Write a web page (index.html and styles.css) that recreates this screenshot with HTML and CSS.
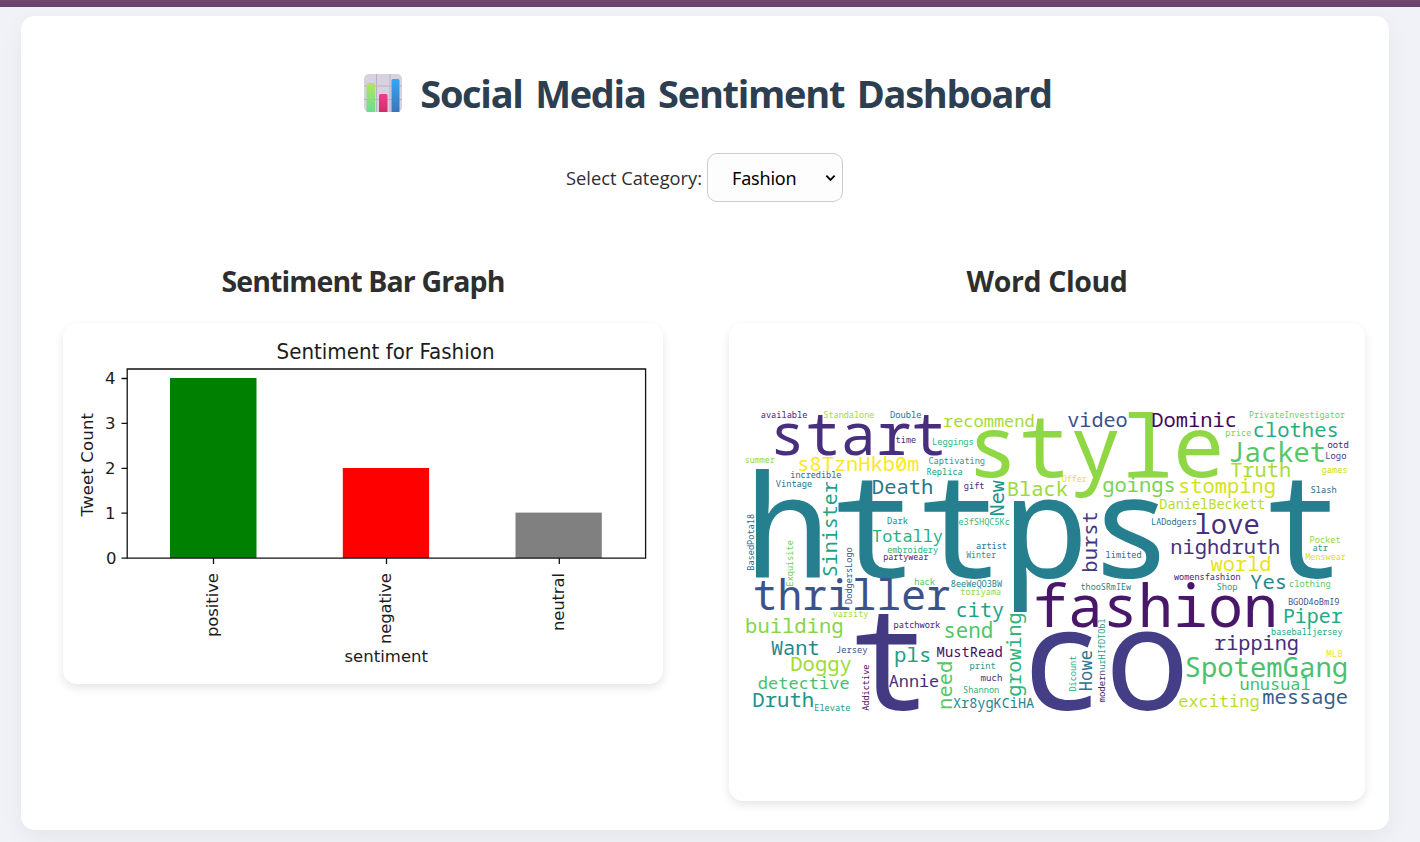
FILE: index.html
```
<!DOCTYPE html>
<html lang="en">
<head>
<meta charset="utf-8">
<title>Social Media Sentiment Dashboard</title>
<link rel="stylesheet" href="styles.css">
</head>
<body>
<div class="topbar"></div>
<main class="container">
  <h1 class="title">
    <svg class="title-icon" viewBox="0 0 40 40" aria-hidden="true">
      <defs>
        <linearGradient id="g1" x1="0" y1="0" x2="0" y2="1"><stop offset="0" stop-color="#b4e45a"/><stop offset="1" stop-color="#66df92"/></linearGradient>
        <linearGradient id="g2" x1="0" y1="0" x2="0" y2="1"><stop offset="0" stop-color="#f03c8c"/><stop offset="1" stop-color="#cf2e68"/></linearGradient>
        <linearGradient id="g3" x1="0" y1="0" x2="0" y2="1"><stop offset="0" stop-color="#35a6f4"/><stop offset="1" stop-color="#3c74bd"/></linearGradient>
      </defs>
      <rect x="1" y="1" width="38" height="38" rx="5" fill="#d8d1e0"/>
      <path d="M13.500 1v38M27 1v38M1 13h38M1 26.500h38" stroke="#b9b2c2" stroke-width="1" fill="none"/>
      <path d="M3.500 39V11.500a1.500 1.500 0 0 1 1.500-1.500h5.500a1.500 1.500 0 0 1 1.500 1.500V39z" fill="url(#g1)"/>
      <path d="M16 39V22.500a1.500 1.500 0 0 1 1.500-1.500h5.500a1.500 1.500 0 0 1 1.500 1.500V39z" fill="url(#g2)"/>
      <path d="M28.500 39V7.500a1.500 1.500 0 0 1 1.500-1.500h5a1.500 1.500 0 0 1 1.500 1.500V39z" fill="url(#g3)"/>
    </svg>
    <span class="title-text">Social Media Sentiment Dashboard</span>
  </h1>
  <div class="picker">
    <label class="picker-label" for="category">Select Category:</label>
    <span class="select">
      <select class="select-input" id="category"><option>Fashion</option></select>
      <svg class="select-arrow" viewBox="0 0 12 8" aria-hidden="true"><path d="M1.500 1.500 6 6l4.500-4.500" fill="none" stroke="#000" stroke-width="2"/></svg>
    </span>
  </div>
  <div class="panels">
    <section class="panel-bar">
      <h2 class="panel-title panel-title-tight">Sentiment Bar Graph</h2>
      <svg class="card chart" viewBox="63 323 600 361">
        <text class="chart-title" x="276.500" y="358.500" textLength="218" lengthAdjust="spacingAndGlyphs">Sentiment for Fashion</text>
        <rect x="170" y="378" width="86.500" height="180" fill="#008000"/>
        <rect x="342.800" y="468" width="86.300" height="90" fill="#f00"/>
        <rect x="515.500" y="512.600" width="86.300" height="45.400" fill="#808080"/>
        <path d="M127.200 369v189.200H645.600V369z" class="axis"/>
        <path d="M121.500 378.500h6M121.500 423.300h6M121.500 468.300h6M121.500 513.200h6M121.500 558.200h6M213.500 558v6M386.500 558v6M559.300 558v6" class="axis"/>
        <g class="ticks">
          <text x="115.500" y="384" text-anchor="end">4</text>
          <text x="115.500" y="429" text-anchor="end">3</text>
          <text x="115.500" y="474" text-anchor="end">2</text>
          <text x="115.500" y="519" text-anchor="end">1</text>
          <text x="116.500" y="564" text-anchor="end">0</text>
          <text transform="translate(218 637) rotate(-90)" textLength="64">positive</text>
          <text transform="translate(391 644) rotate(-90)" textLength="71">negative</text>
          <text transform="translate(563.500 631) rotate(-90)" textLength="58">neutral</text>
          <text transform="translate(93 516.500) rotate(-90)" textLength="103.500">Tweet Count</text>
          <text x="344.500" y="662" textLength="83.500">sentiment</text>
        </g>
      </svg>
    </section>
    <section class="panel-cloud">
      <h2 class="panel-title">Word Cloud</h2>
      <svg class="card cloud" id="cloud" viewBox="729 323 636 478"></svg>
    </section>
  </div>
</main>
<script src="cloud.js"></script>
</body>
</html>
```
FILE: styles.css
```
* { box-sizing: border-box; }
body {
  margin: 0;
  height: 842px;
  overflow: hidden;
  background: #f0f2f7;
  color: #2e2e2e;
  font-family: "Segoe UI", "Open Sans", "Noto Sans", sans-serif;
}
.topbar { height: 7px; background: linear-gradient(#72496f, #68436a); }
.container {
  width: 1368px;
  height: 814px;
  margin: 9px 0 0 21px;
  padding: 47px 24px 0 42px;
  background: #fff;
  border-radius: 14px;
  box-shadow: 0 8px 25px rgba(0, 0, 0, .05);
}
.title {
  display: flex;
  justify-content: center;
  align-items: center;
  gap: 17px;
  height: 60px;
  margin: 0;
  padding-right: 13px;
  color: #2c3e50;
  font-size: 38px;
  font-weight: 700;
  letter-spacing: -1.300px;
  word-spacing: 4px;
  line-height: 60px;
}
.title-icon { width: 40px; height: 40px; }
.title-text { white-space: nowrap; }
.picker {
  display: flex;
  justify-content: center;
  align-items: center;
  gap: 5px;
  height: 49px;
  margin-top: 30px;
  padding-right: 19px;
}
.picker-label { font-size: 18.300px; white-space: nowrap; }
.select { position: relative; display: block; width: 136px; height: 49px; }
.select-input {
  width: 136px;
  height: 49px;
  padding: 0 24px;
  border: 1px solid #ccc;
  border-radius: 10px;
  background: #fdfdfd;
  color: #000;
  font: 18px "Noto Sans", sans-serif;
  letter-spacing: -.2px;
  appearance: none;
}
.select-arrow { position: absolute; right: 7px; top: 21px; width: 11px; height: 8px; }
.panels { display: flex; justify-content: space-between; align-items: flex-start; margin-top: 56px; }
.panel-bar { width: 600px; }
.panel-cloud { width: 636px; }
.panel-title {
  height: 46px;
  margin: 0 0 19px;
  font-size: 28.500px;
  font-weight: 700;
  letter-spacing: -.4px;
  line-height: 46px;
  text-align: center;
}
.panel-title-tight { letter-spacing: -.88px; }
.card {
  display: block;
  width: 100%;
  background: #fff;
  border-radius: 14px;
  box-shadow: 0 4px 10px rgba(0, 0, 0, .1);
}
.chart { height: 361px; fill: #1c1c1c; font-family: "DejaVu Sans", sans-serif; }
.chart-title { font-size: 21px; }
.ticks { font-size: 16.500px; }
.axis { fill: none; stroke: #111; stroke-width: 1.300; }
.cloud { height: 478px; font-family: "Droid Sans Mono", "Noto Sans Mono", "DejaVu Sans Mono", monospace; }
```
FILE: cloud.js
```
// Horizontal words: text, left edge, right edge, baseline, colour, optional vertical stretch
const across = [
  ["available",761.3,807,418,"#472d7b"],["Standalone",824,874,418,"#a5db36"],["Double",890.7,921,418,"#2a788e"],
  ["start",775.7,942,454.8,"#472f7d"],["time",896,915.7,443,"#472d7b"],["Leggings",933,973,445,"#2db27d"],
  ["summer",745.7,774.7,462.7,"#90d743"],["s8TznHkb0m",799.3,918.7,471,"#fde725"],["Captivating",929,984.3,464,"#1f998a"],
  ["Replica",927.3,962,475,"#22a085"],["incredible",791,841,478,"#32648e"],["Vintage",776,811.7,487.3,"#2c738e"],
  ["Death",873.3,932,494.3,"#2a768e"],["https",756,1160,577.7,"#267f8e"],["t",1270,1332.3,577.7,"#267f8e",1.07],
  ["Dark",887.7,907.7,523.7,"#238a8d"],["Totally",872.7,942.3,541.7,"#29af7f"],["embroidery",887.7,937.7,553,"#2ab07f"],
  ["partywear",884,928.3,560,"#482878"],["recommend",944,1033.3,426.7,"#a5db36"],["style",975.7,1219.3,476.8,"#8fd744"],
  ["video",1068,1126.7,426.7,"#3b528b"],["Offer",1062,1086.7,482,"#e2e418"],["gift",964.3,983.7,489,"#481f70"],
  ["Black",1008.7,1067.3,496,"#9bd93c"],["goings",1103.3,1173.7,492.3,"#7ad151"],["e3fSHQC5Kc",959,1009,524.7,"#35b779"],
  ["artist",976.7,1006.3,548.7,"#2f6b8e"],["Winter",966.3,995.7,557.7,"#21908d"],["limited",1106.3,1141,557.7,"#33638d"],
  ["Dominic",1152.7,1235.3,426.7,"#46085c"],["PrivateInvestigator",1249.7,1344.7,418,"#6ece58"],["price",1226,1251,436.3,"#84d44b"],
  ["clothes",1254.3,1336.7,437.3,"#27ad81"],["Jacket",1231,1324,462,"#56c667"],["ootd",1328,1348,448,"#481b6d"],
  ["Logo",1326.3,1346,459,"#424086"],["Truth",1231,1289.7,477,"#aadc32"],["games",1322,1346.7,473,"#c8e020"],
  ["stomping",1180,1274.3,493,"#d2e21b"],["Slash",1311.3,1336,493,"#31688e"],["DanielBeckett",1160.3,1264.3,509,"#b5de2b"],
  ["love",1196.7,1258.3,533.7,"#46307e"],["LADodgers",1152,1196,524.7,"#2d708e"],["nighdruth",1172,1279,553.7,"#46327e"],
  ["Pocket",1310.3,1340,542.7,"#8ed645"],["atr",1313,1327.7,550.7,"#1f948c"],["Menswear",1305.7,1345.7,559.7,"#dde318"],
  ["world",1210.7,1270,571,"#e7e419"],["womensfashion",1174,1240,580,"#482475"],["Yes",1250.7,1285,588.7,"#23898e"],
  ["clothing",1289.7,1330,587,"#5cc863"],["Shop",1217.3,1237,590.3,"#1f9e89"],["BGOD4oBmI9",1288.7,1339,605.3,"#3b528b"],
  ["Piper",1284.7,1342.3,622.7,"#24aa83"],["fashion",1036.3,1274,627.4,"#481769"],["baseballjersey",1271.7,1342.3,635,"#22a884"],
  ["ripping",1215.3,1297.3,650.3,"#472d7b"],["MLB",1326.7,1342.3,656.7,"#f1e51d"],["SpotemGang",1186.7,1346,676.7,"#4ac16d"],
  ["unusual",1240.7,1309.7,690,"#44bf70"],["exciting",1179.3,1258.3,707,"#b8de29"],["message",1263.3,1346.7,704,"#355f8d"],
  ["co",1031,1183,709.8,"#433e85"],["thriller",754.8,949.8,610,"#3b528b"],["hack",915,934.7,585,"#4ec36b"],
  ["8eeWeQO3BW",951.3,1002,586.7,"#26828e"],["toriyama",960.7,1000.3,595.3,"#90d743"],["varsity",833,868,617.3,"#a5db36"],
  ["building",746.7,842,632.7,"#86d549"],["Want",771.3,818,655,"#23888e"],["Jersey",837,867.3,653,"#3b528b"],
  ["Doggy",791.7,851,670.7,"#a0da39"],["detective",758.7,848.7,689,"#44bf70"],["Druth",753.7,812.7,707.3,"#21918c"],
  ["Elevate",815,850,711.3,"#1f9a8a"],["t",856,919,710,"#443a83",1.055],["patchwork",894.3,940,627.7,"#481f70"],
  ["pls",895.7,929.3,661.7,"#1fa287"],["Annie",889,938.3,687.3,"#46327e"],["MustRead",937.3,1001.7,656.7,"#470d60"],
  ["city",957.3,1003.3,616.7,"#1fa287"],["send",945.3,991.7,638.3,"#52c569"],["print",970.3,995,669,"#1f998a"],
  ["much",981,1001.7,681.3,"#472f7d"],["Shannon",963.7,998.7,693.3,"#2eb37c"],["Xr8ygKCiHA",953.3,1034,707.7,"#25848e"],
  ["thooSRmIEw",1081,1131,590,"#26828e"]
];
// Vertical words: text, top edge, bottom edge, baseline x, colour
const upward = [
  ["Sinister",481.7,575.7,837.3,"#1fa187"],["BasedPota18",514.3,570,754,"#2f6c8e"],["Exquisite",540.7,585.7,792.5,"#6ece58"],
  ["DodgersLogo",547.7,603.3,852.3,"#39568c"],["New",480.3,515,1004.3,"#21918c"],["burst",512.7,571,1096.7,"#443983"],
  ["Addictive",665,710.7,868.7,"#471365"],["need",662.3,708.3,952.3,"#56c667"],["growing",614,695.7,1021,"#31b57b"],
  ["Dicount",656.3,691,1076.3,"#2ab07f"],["Howe",651,690,1092.3,"#2c728e"],["modern",670.7,702,1104.7,"#481f70"],
  ["urHIfDTObl",619,669,1104.7,"#20a386"]
];
const cloud = document.getElementById("cloud");
const pen = document.createElement("canvas").getContext("2d");
pen.font = "100px " + getComputedStyle(cloud).fontFamily;

// Sizes a word so that its ink fills the given span
function addWord(text, span, color, place) {
  const m = pen.measureText(text);
  const size = span / (m.actualBoundingBoxLeft + m.actualBoundingBoxRight) * 100;
  const node = document.createElementNS("http://www.w3.org/2000/svg", "text");
  node.textContent = text;
  node.setAttribute("font-size", size.toFixed(2));
  node.setAttribute("fill", color);
  node.setAttribute("transform", place(m.actualBoundingBoxLeft * size / 100));
  cloud.appendChild(node);
}
across.forEach(([t, a, b, y, c, k = 1]) => addWord(t, b - a, c, s => `translate(${a + s} ${y}) scale(1 ${k})`));
upward.forEach(([t, a, b, x, c]) => addWord(t, b - a, c, s => `translate(${x} ${b - s}) rotate(-90)`));
```
